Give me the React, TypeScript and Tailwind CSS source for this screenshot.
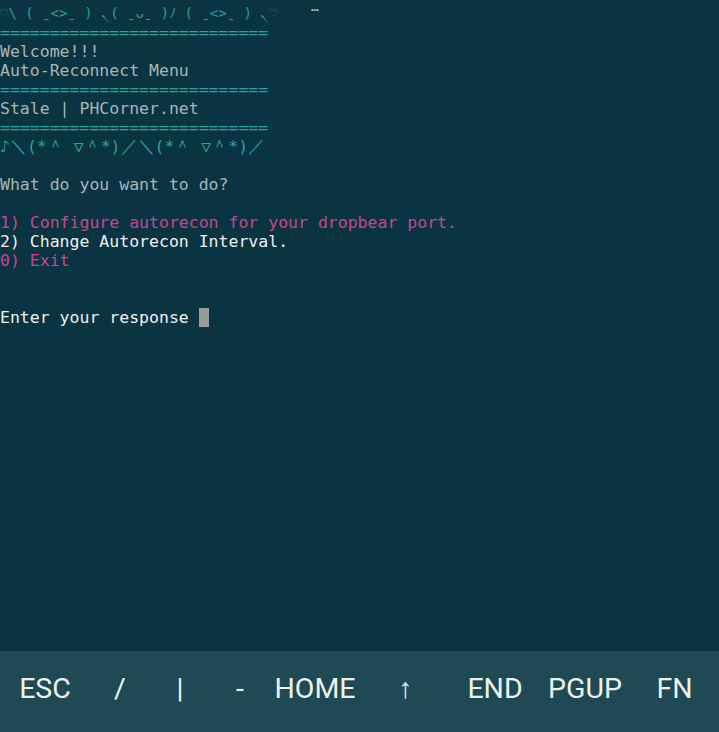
import React from 'react';

const mono = { fontFamily: '"DejaVu Sans Mono", "Liberation Mono", monospace' };

const keys = [
  { label: 'ESC', w: 'w-[90px]' },
  { label: '/', w: 'w-[60px]' },
  { label: '|', w: 'w-[60px]' },
  { label: '-', w: 'w-[60px]' },
  { label: 'HOME', w: 'w-[90px]' },
  { label: '↑', w: 'w-[90px]' },
  { label: 'END', w: 'w-[90px]' },
  { label: 'PGUP', w: 'w-[90px]' },
  { label: 'FN', w: 'flex-1' },
];

export default function App() {
  return (
    <div className="w-[719px] h-[732px] flex flex-col bg-[#0b3442] overflow-hidden">
      {/* Terminal output */}
      <div
        className="flex-1 pt-[4px] text-[16.5px] leading-[19px] text-[#a9b4b5] whitespace-pre relative"
        style={mono}
      >
        <div className="text-[#2a9e9c] text-[14px]">♡\ ( ˍ&lt;&gt;ˍ ) ৲( ˍᴗˍ )ﾉ ( ˍ&lt;&gt;ˍ ) ৲♡</div>
        <div className="text-[#2aa39f]">===========================</div>
        <div>Welcome!!!</div>
        <div>Auto-Reconnect Menu</div>
        <div className="text-[#2aa39f]">===========================</div>
        <div>Stale | PHCorner.net</div>
        <div className="text-[#2aa39f]">===========================</div>
        <div className="text-[#2aa39f]">♪＼(*＾ ▽＾*)／＼(*＾ ▽＾*)／</div>
        <div> </div>
        <div>What do you want to do?</div>
        <div> </div>
        <div className="text-[#c8468e]">1) Configure autorecon for your dropbear port.</div>
        <div className="text-[#eef0ee]">2) Change Autorecon Interval.</div>
        <div className="text-[#c8468e]">0) Exit</div>
        <div> </div>
        <div> </div>
        <div className="text-[#eef0ee] flex items-center">
          Enter your response <span className="inline-block w-[10px] h-[19px] bg-[#979c99]" />
        </div>
        <div className="absolute left-[311px] top-0 text-[13px] text-[#c9d4d4] leading-[14px]">…</div>
      </div>

      {/* Extra keys bar */}
      <div
        className="h-[81px] pb-[4px] bg-[#1f4a55] flex items-center text-[#eef2ea] text-[28.5px]"
        style={{ fontFamily: 'Roboto, "Noto Sans", sans-serif' }}
      >
        {keys.map((k) => (
          <div key={k.label} className={`${k.w} text-center`}>
            {k.label}
          </div>
        ))}
      </div>
    </div>
  );
}
